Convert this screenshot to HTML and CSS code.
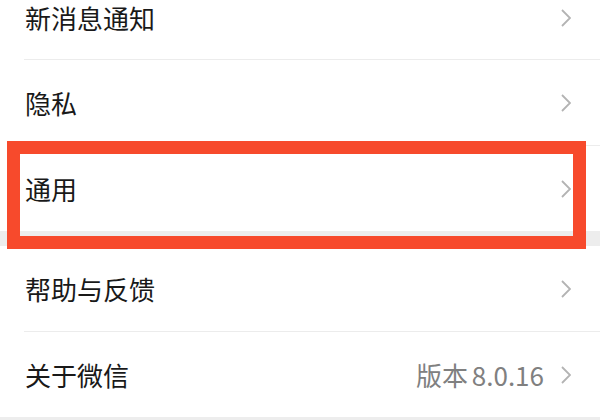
FILE: index.html
```html
<!DOCTYPE html>
<html lang="zh-CN">
<head>
    <meta charset="UTF-8">
    <meta name="viewport" content="width=device-width, initial-scale=1.0">
    <title>设置</title>
    <link rel="stylesheet" href="styles.css">
</head>
<body>
    <div class="settings">
        <div class="group">
            <div class="item">
                <span class="label">新消息通知</span>
                <svg class="arrow" viewBox="0 0 10 18"><path d="M1 1 L9 9 L1 17"/></svg>
            </div>
            <div class="item">
                <span class="label">隐私</span>
                <svg class="arrow" viewBox="0 0 10 18"><path d="M1 1 L9 9 L1 17"/></svg>
            </div>
            <div class="item">
                <span class="label">通用</span>
                <svg class="arrow" viewBox="0 0 10 18"><path d="M1 1 L9 9 L1 17"/></svg>
            </div>
        </div>

        <div class="group">
            <div class="item">
                <span class="label">帮助与反馈</span>
                <svg class="arrow" viewBox="0 0 10 18"><path d="M1 1 L9 9 L1 17"/></svg>
            </div>
            <div class="item">
                <span class="label">关于微信</span>
                <span class="value">版本 8.0.16</span>
                <svg class="arrow" viewBox="0 0 10 18"><path d="M1 1 L9 9 L1 17"/></svg>
            </div>
        </div>
    </div>

    <!-- 标注框 -->
    <div class="highlight"></div>
</body>
</html>
```

FILE: styles.css
```css
body {
    margin: 0;
    font-family: "Noto Sans CJK SC", "Noto Sans", sans-serif;
    background-color: #ededed;
    color: #191919;
    height: 420px;
    overflow: hidden;
    position: relative;
}

.settings {
    margin-top: -24px;
    display: flex;
    flex-direction: column;
    gap: 15px;
}

.group {
    background-color: #ffffff;
    padding-left: 24px;
}

.group:first-child .item:first-child {
    height: 83px;
}

.item {
    display: flex;
    align-items: center;
    height: 85px;
    padding-right: 29px;
    border-bottom: 1px solid #ececec;
    font-size: 26px;
    line-height: 30px;
}

.item:last-child {
    border-bottom: none;
}

.label {
    flex: 1;
    padding-left: 1px;
}

.value {
    color: #808080;
    margin-right: 17px;
    word-spacing: -2px;
}

.arrow {
    width: 10px;
    height: 18px;
}

.arrow path {
    fill: none;
    stroke: #b3b3b3;
    stroke-width: 1.8;
}

.highlight {
    position: absolute;
    left: 7px;
    top: 141px;
    width: 579px;
    height: 108px;
    border: 13px solid #f74a2c;
    box-sizing: border-box;
}
```
